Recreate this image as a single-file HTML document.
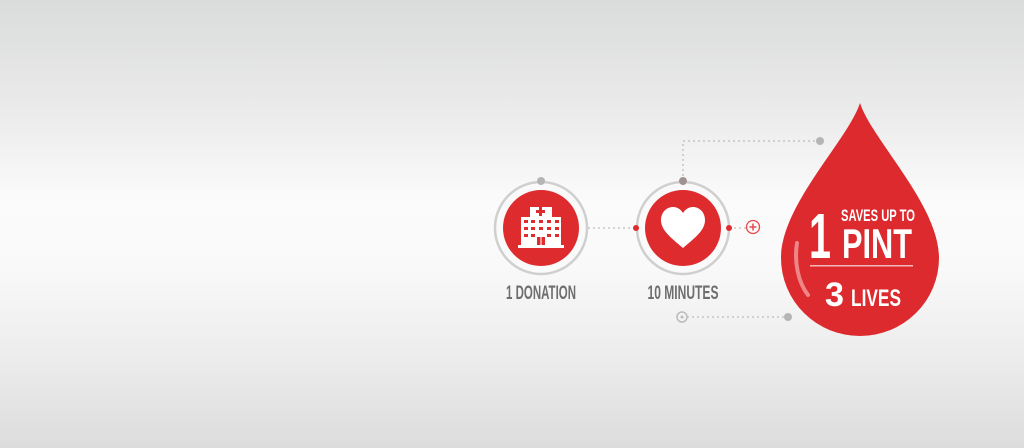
<!DOCTYPE html>
<html><head><meta charset="utf-8"><style>
html,body{margin:0;padding:0;width:1024px;height:448px;overflow:hidden}
body{background:linear-gradient(to bottom,#dadbdb 0%,#ebebeb 25%,#fbfbfb 45%,#f9f9f9 60%,#ececec 80%,#dcdcdc 100%)}
svg{position:absolute;left:0;top:0}
text{font-family:"Liberation Sans Narrow","Liberation Sans",sans-serif;font-weight:bold}
</style></head><body>
<svg width="1024" height="448" viewBox="0 0 1024 448">
<g fill="none" stroke="#bdbdbd" stroke-width="1.3" stroke-dasharray="2 3">
<path d="M683 181 V141 H820"/>
<path d="M588 228 H636"/>
<path d="M729 228 H746"/>
<path d="M687 317 H788"/>
</g>
<circle cx="820" cy="141" r="4" fill="#b5b5b5"/>
<circle cx="788" cy="317" r="4" fill="#b5b5b5"/>
<circle cx="682" cy="317" r="5" fill="none" stroke="#bbb" stroke-width="1.5"/>
<circle cx="682" cy="317" r="1.5" fill="#bbb"/>
<!-- left circle -->
<circle cx="541" cy="228" r="46" fill="#fafafa" stroke="#cfcfcf" stroke-width="2.5"/>
<circle cx="541" cy="228" r="38" fill="#de2b2e"/>
<circle cx="541" cy="181" r="4" fill="#b5b5b5"/>
<!-- hospital -->
<g fill="#fff">
<rect x="530" y="207" width="22" height="38"/>
<rect x="521" y="217" width="40" height="28"/>
<rect x="518" y="245" width="46" height="3"/>
</g>
<g fill="#de2b2e">
<rect x="539" y="207" width="3" height="9"/><rect x="536" y="210" width="9" height="3"/>
<rect x="524" y="220" width="4" height="3"/><rect x="531" y="220" width="4" height="3"/><rect x="539" y="220" width="4" height="3"/><rect x="547" y="220" width="4" height="3"/><rect x="555" y="220" width="4" height="3"/>
<rect x="524" y="227" width="4" height="3"/><rect x="531" y="227" width="4" height="3"/><rect x="539" y="227" width="4" height="3"/><rect x="547" y="227" width="4" height="3"/><rect x="555" y="227" width="4" height="3"/>
<rect x="524" y="234" width="4" height="3"/><rect x="531" y="234" width="4" height="3"/><rect x="547" y="234" width="4" height="3"/><rect x="555" y="234" width="4" height="3"/>
<rect x="537" y="237" width="8" height="8"/>
</g>
<rect x="540.5" y="237" width="1" height="8" fill="#fff"/>
<!-- right circle -->
<circle cx="683" cy="228" r="46" fill="#fafafa" stroke="#cfcfcf" stroke-width="2.5"/>
<circle cx="683" cy="228" r="38" fill="#de2b2e"/>
<circle cx="683" cy="181" r="4" fill="#a09394"/>
<path d="M683 248 C670 237 661 230 661 220 C661 212 667 207 673 207 C678 207 681 210 683 213 C685 210 688 207 693 207 C699 207 705 212 705 220 C705 230 696 237 683 248 Z" fill="#fff"/>
<circle cx="636" cy="228" r="3" fill="#de2b2e"/>
<circle cx="729" cy="228" r="3" fill="#de2b2e"/>
<circle cx="753" cy="227" r="6.5" fill="none" stroke="#e6484b" stroke-width="1.3"/>
<path d="M753 223.5V230.5M749.5 227H756.5" stroke="#e6484b" stroke-width="1.5"/>
<text x="541" y="299" text-anchor="middle" font-size="19" fill="#6e6e6e" textLength="70" lengthAdjust="spacingAndGlyphs">1 DONATION</text>
<text x="683" y="299" text-anchor="middle" font-size="19" fill="#6e6e6e" textLength="71" lengthAdjust="spacingAndGlyphs">10 MINUTES</text>
<!-- drop -->
<path d="M860 103 C848 140 781 205 781 258 A79 78 0 0 0 939 258 C939 205 872 140 860 103 Z" fill="#dc2a2e"/>
<path d="M797 243 C794 262 798 282 808 295" fill="none" stroke="#f29c9e" stroke-width="4" stroke-linecap="round" opacity="0.8"/>
<text x="809" y="258" font-size="64" fill="#fff" textLength="22" lengthAdjust="spacingAndGlyphs">1</text>
<text x="841" y="221" font-size="17" fill="#fff" textLength="74" lengthAdjust="spacingAndGlyphs">SAVES UP TO</text>
<text x="842" y="258" font-size="42" fill="#fff" textLength="70" lengthAdjust="spacingAndGlyphs">PINT</text>
<rect x="810" y="265" width="103" height="1.5" fill="#f3b9ba"/>
<text x="825" y="306" font-size="34" fill="#fff" textLength="19" lengthAdjust="spacingAndGlyphs">3</text>
<text x="851" y="306" font-size="24" fill="#fff" textLength="50" lengthAdjust="spacingAndGlyphs">LIVES</text>
</svg>
</body></html>
